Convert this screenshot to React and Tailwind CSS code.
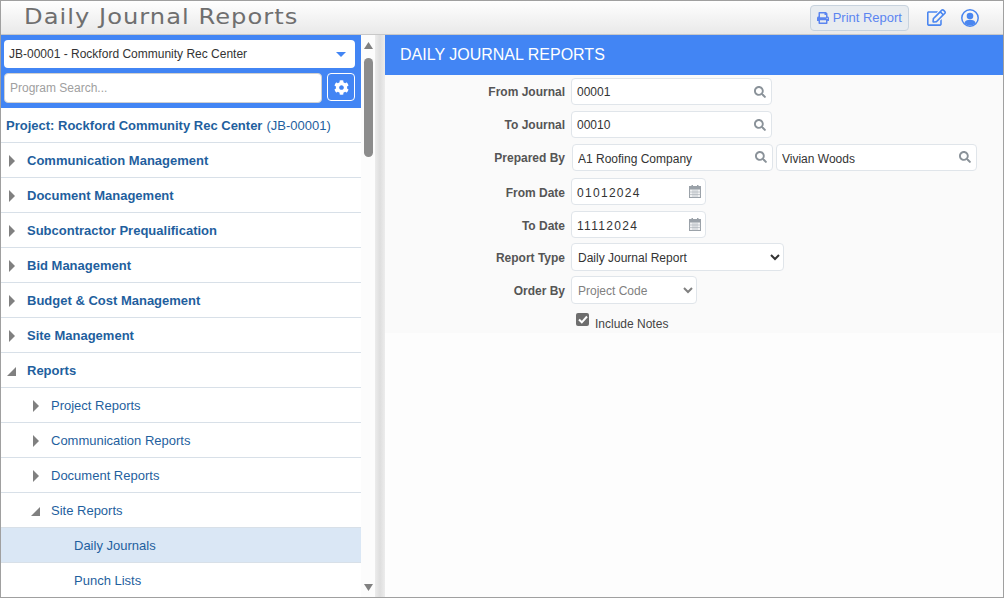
import React from 'react';
import { FaPrint, FaRegEdit, FaCog, FaSearch } from 'react-icons/fa';

const topRows = [
  'Communication Management',
  'Document Management',
  'Subcontractor Prequalification',
  'Bid Management',
  'Budget & Cost Management',
  'Site Management',
];

const CaretRight = () => (
  <svg width="6" height="12" viewBox="0 0 6 12" className="shrink-0"><path d="M0 0 L6 6 L0 12 Z" fill="#808080" /></svg>
);

const CaretOpen = () => (
  <svg width="9" height="9" viewBox="0 0 9 9" className="shrink-0"><path d="M9 0 L9 9 L0 9 Z" fill="#808080" /></svg>
);

const UserIcon = () => (
  <svg width="18" height="18" viewBox="0 0 18 18" className="ml-[15px] shrink-0">
    <circle cx="9" cy="9" r="8.2" fill="none" stroke="#4a86f0" strokeWidth="1.5" />
    <circle cx="9" cy="7" r="3.3" fill="#4a86f0" />
    <path d="M3.4 14.2 C4 11.6 6 10.8 9 10.8 C12 10.8 14 11.6 14.6 14.2 C13 15.8 11 16.4 9 16.4 C7 16.4 5 15.8 3.4 14.2 Z" fill="#4a86f0" />
  </svg>
);

const CalendarIcon = () => (
  <svg width="12" height="13" viewBox="0 0 12 13" className="shrink-0 mr-[-1px]">
    <rect x="0.5" y="1.5" width="11" height="11" fill="#f0f1f2" stroke="#9aa1a8" />
    <rect x="0.5" y="1.5" width="11" height="3" fill="#9aa1a8" />
    <rect x="2.5" y="0" width="1.5" height="3" fill="#9aa1a8" />
    <rect x="8" y="0" width="1.5" height="3" fill="#9aa1a8" />
    <path d="M4 4.5 V12.5 M6 4.5 V12.5 M8 4.5 V12.5 M0.5 7 H11.5 M0.5 9.5 H11.5" stroke="#aab0b6" strokeWidth="0.6" />
  </svg>
);

const NavRow = ({ indent, bold, open, leaf, active, children }) => (
  <div className={`flex items-center h-[35px] pt-[2px] shrink-0 border-b border-[#d8e0e8] ${active ? 'bg-[#dae7f5]' : ''} ${indent}`}>
    {!leaf && (
      <span className="w-[18px] flex items-center">{open ? <span className="-ml-[2px]"><CaretOpen /></span> : <CaretRight />}</span>
    )}
    <span className={`text-[13px] text-[#1f5f9e] ${bold ? 'font-bold' : ''}`}>{children}</span>
  </div>
);

const FieldRow = ({ label, children, labelDrop = '', className = '' }) => (
  <div className={`flex items-center h-[28px] ${className}`}>
    <label className={`w-[180px] text-right text-[12px] font-bold text-[#555555] shrink-0 ${labelDrop}`}>{label}</label>
    <div className="flex ml-[6px] gap-[3px]">{children}</div>
  </div>
);

const TextField = ({ value, icon, width, inputClass = '' }) => (
  <div className={`flex items-center h-[27px] bg-white border border-[#e0e5ea] rounded-[4px] pl-[5px] pr-[5px] ${width}`}>
    <input
      readOnly
      value={value}
      className={`flex-1 min-w-0 bg-transparent outline-none text-[12px] text-[#333333] ${inputClass}`}
    />
    {icon}
  </div>
);

const searchIcon = <FaSearch className="text-[#8a9299] text-[12px] shrink-0" />;
const calendarIcon = <CalendarIcon />;

export default function App() {
  return (
    <div className="w-[1004px] h-[598px] flex flex-col overflow-hidden bg-white border border-[#a0a0a0] font-['Liberation_Sans',Arial,sans-serif]">
      <header className="h-[34px] shrink-0 flex items-center border-b border-[#c8c8c8] bg-gradient-to-b from-white to-[#e9e9e9] pl-[23px] pr-[24px]">
        <h1 className="flex-1 origin-left scale-x-[1.15] font-['DejaVu_Sans',sans-serif] font-normal text-[21px] tracking-[0.9px] text-[#6f6f6f]">Daily Journal Reports</h1>
        <button className="flex items-center gap-[4px] h-[26px] px-[6px] rounded-[4px] border border-[#c8d3de] bg-[#e8ecf0] text-[13px] text-[#5b85f0]">
          <FaPrint className="text-[12px]" />
          Print Report
        </button>
        <FaRegEdit className="ml-[18px] text-[19px] text-[#4a86f0]" />
        <UserIcon />
      </header>

      <div className="flex flex-1 min-h-0">
        <aside className="w-[360px] shrink-0 flex flex-col overflow-hidden">
          <div className="shrink-0 bg-[#4285f4] pt-[5px] pb-[5px] pl-[3px] pr-[6px]">
            <div className="flex items-center justify-between h-[28px] bg-white rounded-[4px] pl-[5px] pr-[9px] text-[12px] text-[#333333]">
              <span>JB-00001 - Rockford Community Rec Center</span>
              <svg width="10" height="5" viewBox="0 0 10 5"><path d="M0 0 H10 L5 5 Z" fill="#4285f4" /></svg>
            </div>
            <div className="flex gap-[5px] mt-[5px] items-start">
              <input
                readOnly
                placeholder="Program Search..."
                className="flex-1 min-w-0 h-[30px] rounded-[4px] bg-white border border-[#d0d0d0] px-[5px] text-[12px] outline-none placeholder:text-[#a0a0a0]"
              />
              <button className="flex items-center justify-center w-[28px] h-[28px] rounded-[4px] border border-white text-white">
                <FaCog className="text-[15px]" />
              </button>
            </div>
          </div>
          <div className="h-[35px] pt-[2px] shrink-0 flex items-center pl-[5px] border-b border-[#d8e0e8] text-[13px] text-[#1f5f9e]">
            <span className="font-bold">Project: Rockford Community Rec Center</span>
            <span className="ml-[4px]">(JB-00001)</span>
          </div>
          {topRows.map((t) => (
            <NavRow key={t} indent="pl-[8px]" bold>{t}</NavRow>
          ))}
          <NavRow indent="pl-[8px]" bold open>Reports</NavRow>
          <NavRow indent="pl-[32px]">Project Reports</NavRow>
          <NavRow indent="pl-[32px]">Communication Reports</NavRow>
          <NavRow indent="pl-[32px]">Document Reports</NavRow>
          <NavRow indent="pl-[32px]" open>Site Reports</NavRow>
          <NavRow indent="pl-[73px]" leaf active>Daily Journals</NavRow>
          <NavRow indent="pl-[73px]" leaf>Punch Lists</NavRow>
        </aside>

        <div className="w-[14px] shrink-0 flex flex-col items-center bg-[#fcfcfc] pt-[7px] pb-[6px]">
          <svg width="9" height="7" viewBox="0 0 9 7" className="shrink-0"><path d="M4.5 0 L9 7 H0 Z" fill="#808080" /></svg>
          <div className="w-[9px] h-[99px] mt-[9px] rounded-full bg-[#8c8c8c]" />
          <svg width="9" height="7" viewBox="0 0 9 7" className="shrink-0 mt-auto"><path d="M0 0 H9 L4.5 7 Z" fill="#808080" /></svg>
        </div>
        <div className="w-[10px] shrink-0 bg-gradient-to-r from-[#ececec] via-[#dedede] to-[#ececec]" />

        <main className="flex-1 min-w-0 flex flex-col bg-[#fdfdfd]">
          <div className="h-[40px] shrink-0 flex items-center bg-[#4285f4] pl-[15px] text-[16px] text-white">DAILY JOURNAL REPORTS</div>
          <form className="bg-[#fafafa] pt-[3px] h-[258px] flex flex-col gap-[5px]">
            <FieldRow label="From Journal">
              <TextField value="00001" icon={searchIcon} width="w-[201px]" />
            </FieldRow>
            <FieldRow label="To Journal">
              <TextField value="00010" icon={searchIcon} width="w-[201px]" />
            </FieldRow>
            <FieldRow label="Prepared By" labelDrop="pt-[2px]">
              <div className="ml-[1px]"><TextField value="A1 Roofing Company" icon={searchIcon} width="w-[201px]" inputClass="pt-[3px]" /></div>
              <TextField value="Vivian Woods" icon={searchIcon} width="w-[201px]" inputClass="pt-[3px]" />
            </FieldRow>
            <FieldRow label="From Date" labelDrop="pt-[4px]" className="mt-[1px]">
              <TextField value="01012024" icon={calendarIcon} width="w-[135px]" inputClass="pt-[3px] tracking-[1.3px]" />
            </FieldRow>
            <FieldRow label="To Date" labelDrop="pt-[4px]">
              <TextField value="11112024" icon={calendarIcon} width="w-[135px]" inputClass="pt-[3px] tracking-[1.3px]" />
            </FieldRow>
            <FieldRow label="Report Type" labelDrop="pt-[2px]">
              <select defaultValue="Daily Journal Report" className="w-[213px] h-[28px] pt-[2px] bg-white border border-[#e0e5ea] rounded-[4px] pl-[2px] text-[12px] text-[#333333] outline-none">
                <option>Daily Journal Report</option>
              </select>
            </FieldRow>
            <FieldRow label="Order By" labelDrop="pt-[2px]">
              <select defaultValue="Project Code" className="w-[126px] h-[28px] pt-[2px] bg-white border border-[#e0e5ea] rounded-[4px] pl-[2px] text-[12px] text-[#808080] outline-none">
                <option>Project Code</option>
              </select>
            </FieldRow>
            <label className="flex items-start ml-[191px] mt-[4px] gap-[6px] text-[12px] text-[#444444]">
              <span className="flex items-center justify-center w-[13px] h-[13px] rounded-[2px] bg-[#6e6e6e]">
                <svg width="10" height="9" viewBox="0 0 10 9"><path d="M1 4.5 L3.8 7.3 L9 1.5" stroke="#fff" strokeWidth="2" fill="none" /></svg>
              </span>
              <span className="mt-[2px]">Include Notes</span>
            </label>
          </form>
        </main>
      </div>
    </div>
  );
}
